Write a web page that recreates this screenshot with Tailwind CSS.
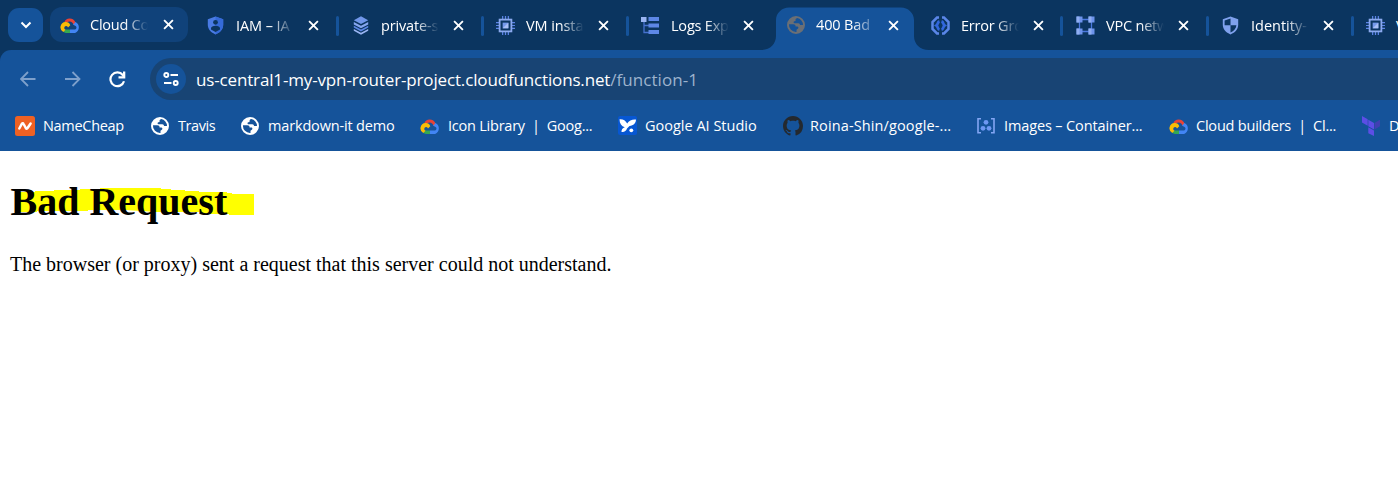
<!DOCTYPE html>
<html lang="en">
<head>
<meta charset="utf-8">
<title>400 Bad Request</title>
<script src="https://cdn.jsdelivr.net/npm/@tailwindcss/browser@4"></script>
</head>
<body class="w-[1398px] h-[504px] overflow-hidden bg-white font-['Open_Sans','Noto_Sans',sans-serif] text-white">
<svg class="hidden">
  <defs>
    <symbol id="cloud" viewBox="0 0 20 16">
      <path d="M4.300 5.200A6 6 0 0 1 15 4.600l.6 1.200-2.100 2.100a4 4 0 0 0-6.400-2.600z" fill="#ea4335"/>
      <path d="M15.400 5a6 6 0 0 1-.3 11H10v-3.400h5a2 2 0 0 0 .6-3.600l-2.500-1.200z" fill="#4285f4"/>
      <path d="M3.200 14.800l2.300-2.400 1 .2H10V16H6a6 6 0 0 1-2.800-1.200z" fill="#34a853"/>
      <path d="M5.500 5c2.200-.2 4 .8 4.800 3.200L8 10.500a1.900 1.900 0 1 0-2.400 2.200L3.300 15A5.300 5.300 0 0 1 5.500 5z" fill="#fbbc05"/>
    </symbol>
    <symbol id="globe" viewBox="0 0 18 18">
      <path fill="currentColor" fill-rule="evenodd" d="M9 0a9 9 0 1 1 0 18A9 9 0 0 1 9 0zM10.200 2.100A7 7 0 0 1 16 9h-3c0-1.100-.6-1.800-1.700-1.800H7.600c-1.200 0-1.500-1.700-.3-2l1.300-.3C8.200 3.600 8.900 2.500 10.200 2.100zM2 8.200h4.300c1.500 0 2.300.9 2.300 2.300h1.700c1.200 0 1.300 1.300.8 2l-1.600 1.300v2.100A7 7 0 0 1 2 8.200z"/>
    </symbol>
    <symbol id="x" viewBox="0 0 10 10"><path d="M1 1l8 8M9 1L1 9" stroke="#fff" stroke-width="1.700" fill="none"/></symbol>
    <symbol id="chip" viewBox="0 0 20 20">
      <path d="M7 0v20M10 0v20M13 0v20M0 7h20M0 10h20M0 13h20" stroke="#5b84e6" stroke-width="1.300"/>
      <rect x="3.800" y="3.800" width="12.400" height="12.400" fill="#0b3560" stroke="#8ba9ee" stroke-width="1.900"/>
      <rect x="7" y="7" width="6" height="6" fill="#7599ea"/><path d="M13 7v6H7z" fill="#a9c0f5"/>
    </symbol>
  </defs>
</svg>

<header class="h-[50px] bg-[#0b3560] flex pl-2 text-[14.500px]">
  <button class="mt-2 mr-[7px] w-[35px] h-[34px] rounded-[11px] bg-[#15539a] grid place-items-center shrink-0">
    <svg class="w-3 h-3" viewBox="0 0 12 12"><path d="M1.500 3.500L6 8l4.500-4.500" stroke="#fff" stroke-width="2" fill="none"/></svg>
  </button>

  <div class="w-[145px] shrink-0 pt-[7px]">
    <div class="w-[138px] h-[35px] rounded-[12px] bg-[#10427a] flex items-center pl-[10px]">
      <svg class="w-5 h-4 shrink-0"><use href="#cloud"/></svg>
      <span class="ml-[10px] w-[58px] whitespace-nowrap tracking-[-0.250px] [mask-image:linear-gradient(to_right,#000_60%,transparent)]">Cloud Co</span>
      <svg class="ml-[15px] w-[11px] h-[11px] shrink-0"><use href="#x"/></svg>
    </div>
  </div>

  <div class="w-[145px] shrink-0 flex items-center pl-[12px] h-[51px]">
    <svg class="w-[17px] h-[19px] shrink-0" viewBox="0 0 17 19"><path d="M8.500.5l7.700 2.800v5.500c0 4.300-3 7.800-7.700 9.600C3.800 16.600.8 13.100.8 8.800V3.300z" fill="#4a7be4"/><path d="M8.500.5l7.700 2.800v5.500c0 4.300-3 7.800-7.700 9.600z" fill="#356ad8"/><circle cx="8.500" cy="6.300" r="2.400" fill="#0b3560"/><path d="M4 13.500v-1.200c0-1.700 2-2.600 4.500-2.600s4.500.9 4.500 2.600v1.200l-4.500 2.600z" fill="#0b3560"/></svg>
    <span class="ml-[12px] w-[58px] whitespace-nowrap tracking-[-0.100px] [mask-image:linear-gradient(to_right,#000_60%,transparent)]">IAM – IA</span>
    <svg class="ml-[14px] w-[11px] h-[11px] shrink-0"><use href="#x"/></svg>
    <i class="ml-[17px] w-[3px] h-5 rounded bg-[#15539a]"></i>
  </div>

  <div class="w-[145px] shrink-0 flex items-center pl-[13px] h-[51px]">
    <svg class="w-[16px] h-[19px] shrink-0" viewBox="0 0 16 19"><path d="M8 .3l7.200 3.900L8 8 .8 4.200z" fill="#7197ea"/><path d="M.8 6L8 9.800 15.200 6v2.500L8 12.300.8 8.500z" fill="#86a6ef"/><path d="M.8 9.800L8 13.600l7.200-3.800v1.800L8 15.400.8 11.600z" fill="#5d87e6"/><path d="M.8 12.900L8 16.700l7.200-3.800v1.800L8 18.700l-7.200-4z" fill="#9ab5f3"/></svg>
    <span class="ml-[12px] w-[58px] whitespace-nowrap tracking-[-0.150px] [mask-image:linear-gradient(to_right,#000_60%,transparent)]">private-s</span>
    <svg class="ml-[14px] w-[11px] h-[11px] shrink-0"><use href="#x"/></svg>
    <i class="ml-[17px] w-[3px] h-5 rounded bg-[#15539a]"></i>
  </div>

  <div class="w-[145px] shrink-0 flex items-center pl-[11px] h-[51px]">
    <svg class="w-[19px] h-[19px] shrink-0"><use href="#chip"/></svg>
    <span class="ml-[11px] w-[58px] whitespace-nowrap tracking-[-0.100px] [mask-image:linear-gradient(to_right,#000_60%,transparent)]">VM insta</span>
    <svg class="ml-[14px] w-[11px] h-[11px] shrink-0"><use href="#x"/></svg>
    <i class="ml-[17px] w-[3px] h-5 rounded bg-[#15539a]"></i>
  </div>

  <div class="w-[146px] shrink-0 flex items-center pl-[11px] h-[51px]">
    <svg class="w-[19px] h-[19px] shrink-0" viewBox="0 0 19 19"><path d="M3 4v12.500h5M3 9.500h5" stroke="#4672cf" stroke-width="1.300" fill="none"/><path d="M0 1h5.500v5H0z" fill="#9ab5f3"/><path d="M7.500 1H18v4H7.500zM7.500 7.500H18v4H7.500zM7.500 14H18v4H7.500z" fill="#5d87e6"/></svg>
    <span class="ml-[11px] w-[58px] whitespace-nowrap tracking-[-0.200px] [mask-image:linear-gradient(to_right,#000_60%,transparent)]">Logs Exp</span>
    <svg class="ml-[14px] w-[11px] h-[11px] shrink-0"><use href="#x"/></svg>
  </div>

  <div class="w-[144px] shrink-0 pt-[7px] relative">
    <svg class="absolute left-[-15px] top-[7px] w-[168px] h-[43px]" viewBox="0 0 168 43"><path d="M0 43c9 0 15-6 15-14V13C15 6 21 .5 28 .5h112c7 0 13 5.500 13 12.500v16c0 8 6 14 15 14z" fill="#15539a"/></svg>
    <div class="relative flex items-center pl-[11px] h-[36px]">
      <svg class="w-[18px] h-[18px] shrink-0 text-[#6b6f75]"><use href="#globe"/></svg>
      <span class="ml-[11px] w-[55px] whitespace-nowrap tracking-[-0.150px] [mask-image:linear-gradient(to_right,#000_65%,transparent_115%)]">400 Bad</span>
      <svg class="ml-[17px] w-[11px] h-[11px] shrink-0"><use href="#x"/></svg>
    </div>
  </div>

  <div class="w-[145px] shrink-0 flex items-center pl-[11px] h-[51px]">
    <svg class="w-[19px] h-[19px] shrink-0" viewBox="0 0 19 19" fill="none"><path d="M8 1.500H6L1.500 6v7L6 17.500h2M11 1.500h2L17.500 6v7L13 17.500h-2" stroke="#5b86e8" stroke-width="2.500"/><path d="M8.500 5.300C6.300 6 7 8.500 5.500 9.500c1.500 1 .8 3.500 3 4.200M10.500 5.300c2.200.7 1.500 3.200 3 4.200-1.500 1-.8 3.500-3 4.200" stroke="#3267dd" stroke-width="2.800"/></svg>
    <span class="ml-[11px] w-[58px] whitespace-nowrap tracking-[-0.200px] [mask-image:linear-gradient(to_right,#000_60%,transparent)]">Error Gro</span>
    <svg class="ml-[14px] w-[11px] h-[11px] shrink-0"><use href="#x"/></svg>
    <i class="ml-[16px] w-[3px] h-5 rounded bg-[#15539a]"></i>
  </div>

  <div class="w-[145px] shrink-0 flex items-center pl-[11px] h-[51px]">
    <svg class="w-[19px] h-[19px] shrink-0" viewBox="0 0 19 19"><path d="M3.500 3.500h12v12h-12z" fill="none" stroke="#4b78df" stroke-width="1.300"/><path d="M.5.500h6v6h-6zM12.500.500h6v6h-6zM.5 12.500h6v6h-6zM12.500 12.500h6v6h-6z" fill="#6d93eb"/><path d="M.5.500h3v6h-3zM12.500.500h3v6h-3zM.5 12.500h3v6h-3zM12.500 12.500h3v6h-3z" fill="#8faef2"/></svg>
    <span class="ml-[11px] w-[58px] whitespace-nowrap tracking-[-0.200px] [mask-image:linear-gradient(to_right,#000_60%,transparent)]">VPC netw</span>
    <svg class="ml-[14px] w-[11px] h-[11px] shrink-0"><use href="#x"/></svg>
    <i class="ml-[17px] w-[3px] h-5 rounded bg-[#15539a]"></i>
  </div>

  <div class="w-[145px] shrink-0 flex items-center pl-[12px] h-[51px]">
    <svg class="w-[17px] h-[19px] shrink-0" viewBox="0 0 17 19"><path d="M8.500.5l7.700 2.800v5.500c0 4.300-3 7.800-7.700 9.600C3.800 16.600.8 13.100.8 8.800V3.300z" fill="#7fa1ed"/><path d="M8.500 2.500v6.800H2.600V4.600zM8.500 9.300h5.900c-.2 3.400-2.500 5.800-5.900 7.200z" fill="#0b3560"/></svg>
    <span class="ml-[12px] w-[58px] whitespace-nowrap [mask-image:linear-gradient(to_right,#000_60%,transparent)]">Identity-</span>
    <svg class="ml-[14px] w-[11px] h-[11px] shrink-0"><use href="#x"/></svg>
    <i class="ml-[17px] w-[3px] h-5 rounded bg-[#15539a]"></i>
  </div>

  <div class="shrink-0 flex items-center pl-[11px] h-[51px]">
    <svg class="w-[19px] h-[19px] shrink-0"><use href="#chip"/></svg>
    <span class="ml-[11px]">V</span>
  </div>
</header>

<div class="bg-[#0b3560]">
<nav class="h-[101px] bg-[#15539a] rounded-tl-[11px] pt-2">
  <div class="flex items-center h-[42px] pl-5">
    <svg class="w-[16px] h-[16px] shrink-0" viewBox="0 0 16 16"><path d="M15.500 8H1.500M8 1L1 8l7 7" stroke="#7ea0cb" stroke-width="1.800" fill="none"/></svg>
    <svg class="ml-[28px] w-[17px] h-[16px] shrink-0" viewBox="0 0 17 16"><path d="M1 8h14M8.500 1l7 7-7 7" stroke="#7ea0cb" stroke-width="1.800" fill="none"/></svg>
    <svg class="ml-[28px] w-[17px] h-[17px] shrink-0" viewBox="0 0 17 17"><path d="M15 10.200A6.900 6.900 0 1 1 13.800 4L15 5.500" stroke="#fff" stroke-width="2.200" fill="none"/><path d="M16.300.5v6.900H9.500V5.200H14V.5z" fill="#fff"/></svg>
    <div class="ml-[24px] h-[42px] flex-1 rounded-l-full bg-[#184474] flex items-center pl-[6px]">
      <div class="w-[30px] h-[30px] rounded-full bg-[#15539a] grid place-items-center shrink-0">
        <svg class="w-4 h-4" viewBox="0 0 16 16" fill="none" stroke="#fff" stroke-width="1.900"><circle cx="3.300" cy="4" r="2"/><path d="M7.500 4H15M1 12h7.500"/><circle cx="12.700" cy="12" r="2"/></svg>
      </div>
      <span class="ml-[10px] pt-px text-[17px] whitespace-nowrap tracking-[-0.150px]">us-central1-my-vpn-router-project.cloudfunctions.net<span class="text-[#9db3cd] tracking-[0.050px]">/function-1</span></span>
    </div>
  </div>
  <div class="flex items-center h-[51px] pl-[15px] text-[14.500px] whitespace-nowrap">
    <div class="w-[136px] shrink-0 flex items-center">
      <svg class="w-5 h-5" viewBox="0 0 20 20"><rect width="20" height="20" rx="2.500" fill="#ee6123"/><path d="M4.300 12.500L6.800 8c.6-1 1.300-1 1.800 0l2.200 4c.6 1 1.300 1 1.800 0l3-4.500" stroke="#fff" stroke-width="2.500" stroke-linecap="round" fill="none"/></svg>
      <span class="ml-[8px] tracking-[-0.300px]">NameCheap</span>
    </div>
    <div class="w-[90px] shrink-0 flex items-center">
      <svg class="w-[18px] h-[18px]"><use href="#globe"/></svg>
      <span class="ml-[9px] tracking-[-0.400px]">Travis</span>
    </div>
    <div class="w-[179px] shrink-0 flex items-center">
      <svg class="w-[18px] h-[18px]"><use href="#globe"/></svg>
      <span class="ml-[9px] tracking-[-0.160px]">markdown-it demo</span>
    </div>
    <div class="w-[198px] shrink-0 flex items-center">
      <svg class="w-5 h-4"><use href="#cloud"/></svg>
      <span class="ml-[8px] tracking-[-0.230px]">Icon Library&nbsp; |&nbsp; Goog...</span>
    </div>
    <div class="w-[165px] shrink-0 flex items-center">
      <svg class="w-[19px] h-[19px]" viewBox="0 0 19 19"><rect width="19" height="19" rx="2" fill="#0757d3"/><path d="M1.500 3.200c3.500-.3 6 1 7.700 4.300C11 4.500 14.500 3 18 3.500c0 3.500-2.500 6-6.500 6.500L9 12.500c-.8 2.500-2.800 4-5.500 3.500-.2-2.300 1-4 3.300-4.800C3.500 10.200 1.500 7.500 1.500 3.200z" fill="#fff"/><circle cx="13.300" cy="14.300" r="1.900" fill="#fff"/></svg>
      <span class="ml-[8px]">Google AI Studio</span>
    </div>
    <div class="w-[193px] shrink-0 flex items-center">
      <svg class="w-5 h-5" viewBox="0 0 16 16"><path fill="#24292f" d="M8 0C3.580 0 0 3.580 0 8c0 3.540 2.290 6.530 5.470 7.590.4.070.55-.17.55-.38 0-.19-.01-.82-.01-1.490-2.010.37-2.530-.49-2.690-.94-.09-.23-.48-.94-.82-1.130-.28-.15-.68-.52-.01-.53.63-.01 1.080.58 1.230.82.72 1.210 1.870.87 2.330.66.07-.52.280-.87.510-1.070-1.780-.2-3.640-.89-3.640-3.950 0-.87.310-1.590.820-2.150-.08-.2-.36-1.020.080-2.120 0 0 .67-.21 2.200.82.640-.18 1.320-.27 2-.27s1.360.090 2 .27c1.530-1.040 2.200-.82 2.200-.82.44 1.100.160 1.920.080 2.120.51.560.820 1.270.820 2.150 0 3.070-1.870 3.750-3.650 3.950.290.250.540.730.540 1.480 0 1.070-.01 1.930-.01 2.200 0 .21.150.46.550.38A8.010 8.010 0 0 0 16 8c0-4.420-3.580-8-8-8z"/></svg>
      <span class="ml-[7px] tracking-[0.120px]">Roina-Shin/google-...</span>
    </div>
    <div class="w-[192px] shrink-0 flex items-center">
      <svg class="w-5 h-[18px]" viewBox="0 0 20 18"><path d="M5 1.800H2v14h3M15 1.800h3v14h-3" stroke="#83a6f3" stroke-width="1.600" fill="none"/><g fill="#6d97f2"><circle cx="10" cy="5.300" r="2.400"/><circle cx="7" cy="11.300" r="2.400"/><circle cx="13" cy="11.300" r="2.400"/></g></svg>
      <span class="ml-[8px] tracking-[-0.130px]">Images – Container...</span>
    </div>
    <div class="w-[194px] shrink-0 flex items-center">
      <svg class="ml-px w-5 h-4"><use href="#cloud"/></svg>
      <span class="ml-[7px] tracking-[-0.210px]">Cloud builders&nbsp; |&nbsp; Cl...</span>
    </div>
    <div class="shrink-0 flex items-center">
      <svg class="w-[18px] h-5" viewBox="0 0 18 20"><path d="M0 0l5.700 3.300v6.500L0 6.500zM6.300 3.700L12 7v6.500l-5.700-3.300zM6.300 11.200L12 14.500V20l-5.700-2.700z" fill="#5c4ee5"/><path d="M12.500 7L18 3.700v6.500l-5.500 3.300z" fill="#4040b2"/></svg>
      <span class="ml-[9px]">D</span>
    </div>
  </div>
</nav>
</div>

<main class="pl-[10px] pt-[28px] text-black font-['Liberation_Serif',serif]">
  <div class="relative">
    <svg class="absolute left-0 top-[7px] w-[246px] h-[32px]" viewBox="10 186 246 32"><path d="M20 192h15v-1h19v-1h26v-1h20v-1h61v1h10v1h14v1h14v1h28v1h5v1h22v21h-25v-1h-27v-2h-46l-30-2h-38v1h-51v1H20z" fill="#ff0"/></svg>
    <h1 class="relative pl-[0.500px] text-[40px] leading-[46px] font-bold whitespace-nowrap">Bad Request</h1>
  </div>
  <p class="mt-[28px] text-[20px] leading-[23px] whitespace-nowrap">The browser (or proxy) sent a request that this server could not understand.</p>
</main>
</body>
</html>
